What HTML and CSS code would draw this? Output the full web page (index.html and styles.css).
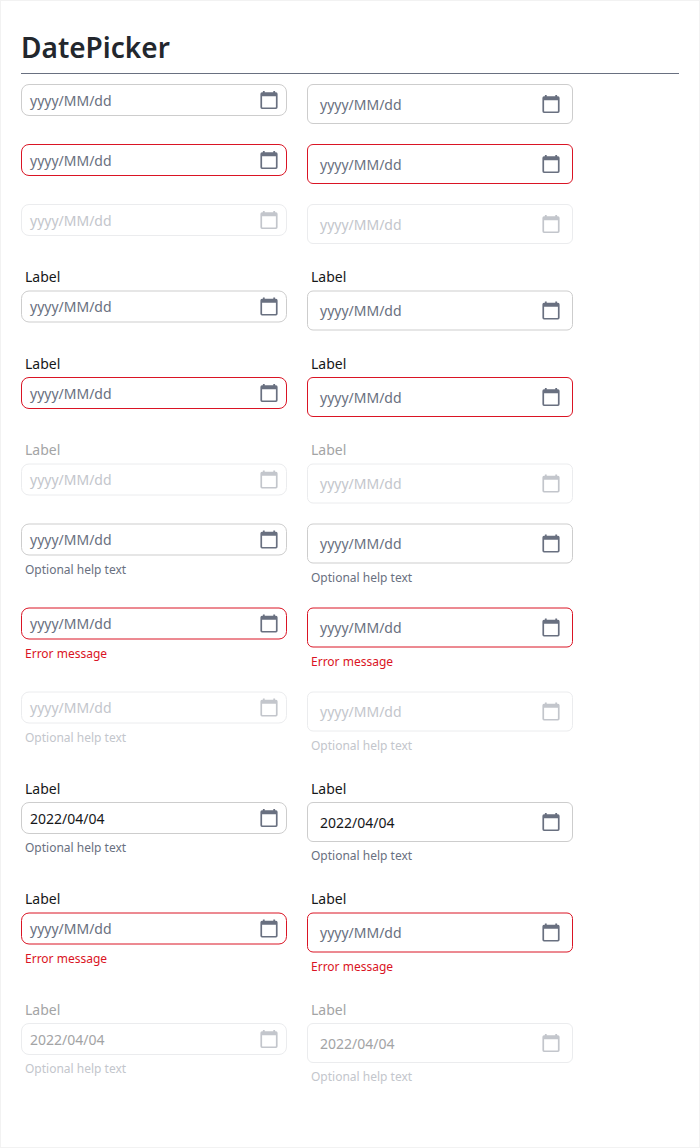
FILE: index.html
```html
<!DOCTYPE html>
<html lang="en">
<head>
<meta charset="utf-8">
<title>DatePicker</title>
<link rel="stylesheet" href="styles.css">
</head>
<body>
<svg width="0" height="0" class="sprite">
  <symbol id="cal" viewBox="0 0 18 20">
    <path fill="currentColor" fill-rule="evenodd" d="M2.900 1h1.800v1.300h8.600V1h1.800v1.300h.9a1.600 1.600 0 0 1 1.600 1.600V17.300a1.600 1.600 0 0 1-1.600 1.600H2a1.600 1.600 0 0 1-1.600-1.600V3.900A1.600 1.600 0 0 1 2 2.300h.9zM2.100 6.200v10.900q0 .3.3.3h13.200q.3 0 .3-.3V6.200z"/>
  </symbol>
</svg>
<main class="page">
  <h1 class="title">DatePicker</h1>
  <section class="grid">
    <div class="picker"><div class="control"><span>yyyy/MM/dd</span><svg class="icon"><use href="#cal"/></svg></div></div>
    <div class="picker large"><div class="control"><span>yyyy/MM/dd</span><svg class="icon"><use href="#cal"/></svg></div></div>

    <div class="picker error"><div class="control"><span>yyyy/MM/dd</span><svg class="icon"><use href="#cal"/></svg></div></div>
    <div class="picker large error"><div class="control"><span>yyyy/MM/dd</span><svg class="icon"><use href="#cal"/></svg></div></div>

    <div class="picker disabled"><div class="control"><span>yyyy/MM/dd</span><svg class="icon"><use href="#cal"/></svg></div></div>
    <div class="picker large disabled"><div class="control"><span>yyyy/MM/dd</span><svg class="icon"><use href="#cal"/></svg></div></div>

    <div class="picker half"><div class="label">Label</div><div class="control"><span>yyyy/MM/dd</span><svg class="icon"><use href="#cal"/></svg></div></div>
    <div class="picker large half"><div class="label">Label</div><div class="control"><span>yyyy/MM/dd</span><svg class="icon"><use href="#cal"/></svg></div></div>

    <div class="picker error"><div class="label tall">Label</div><div class="control"><span>yyyy/MM/dd</span><svg class="icon"><use href="#cal"/></svg></div></div>
    <div class="picker large error"><div class="label tall">Label</div><div class="control"><span>yyyy/MM/dd</span><svg class="icon"><use href="#cal"/></svg></div></div>

    <div class="picker disabled half"><div class="label">Label</div><div class="control"><span>yyyy/MM/dd</span><svg class="icon"><use href="#cal"/></svg></div></div>
    <div class="picker large disabled half"><div class="label">Label</div><div class="control"><span>yyyy/MM/dd</span><svg class="icon"><use href="#cal"/></svg></div></div>

    <div class="picker half"><div class="control"><span>yyyy/MM/dd</span><svg class="icon"><use href="#cal"/></svg></div><div class="help">Optional help text</div></div>
    <div class="picker large half"><div class="control"><span>yyyy/MM/dd</span><svg class="icon"><use href="#cal"/></svg></div><div class="help">Optional help text</div></div>

    <div class="picker error half"><div class="control"><span>yyyy/MM/dd</span><svg class="icon"><use href="#cal"/></svg></div><div class="help">Error message</div></div>
    <div class="picker large error half"><div class="control"><span>yyyy/MM/dd</span><svg class="icon"><use href="#cal"/></svg></div><div class="help">Error message</div></div>

    <div class="picker disabled half"><div class="control"><span>yyyy/MM/dd</span><svg class="icon"><use href="#cal"/></svg></div><div class="help">Optional help text</div></div>
    <div class="picker large disabled half"><div class="control"><span>yyyy/MM/dd</span><svg class="icon"><use href="#cal"/></svg></div><div class="help">Optional help text</div></div>

    <div class="picker filled"><div class="label tall">Label</div><div class="control"><span>2022/04/04</span><svg class="icon"><use href="#cal"/></svg></div><div class="help">Optional help text</div></div>
    <div class="picker large filled"><div class="label tall">Label</div><div class="control"><span>2022/04/04</span><svg class="icon"><use href="#cal"/></svg></div><div class="help">Optional help text</div></div>

    <div class="picker error half"><div class="label">Label</div><div class="control"><span>yyyy/MM/dd</span><svg class="icon"><use href="#cal"/></svg></div><div class="help">Error message</div></div>
    <div class="picker large error half"><div class="label">Label</div><div class="control"><span>yyyy/MM/dd</span><svg class="icon"><use href="#cal"/></svg></div><div class="help">Error message</div></div>

    <div class="picker disabled filled"><div class="label tall">Label</div><div class="control"><span>2022/04/04</span><svg class="icon"><use href="#cal"/></svg></div><div class="help">Optional help text</div></div>
    <div class="picker large disabled filled"><div class="label tall">Label</div><div class="control"><span>2022/04/04</span><svg class="icon"><use href="#cal"/></svg></div><div class="help">Optional help text</div></div>
  </section>
</main>
</body>
</html>
```

FILE: styles.css
```css
* { box-sizing: border-box; }
body {
  margin: 0;
  background: #fff;
  font-family: "Noto Sans", sans-serif;
  font-size: 14px;
  color: #161719;
}
.sprite { display: block; }
.page {
  height: 1148px;
  border: 1px solid #f2f2f2;
  padding: 20px;
}
.title {
  margin: 0;
  height: 53px;
  padding-top: 7px;
  border-bottom: 1px solid #697080;
  font-size: 28px;
  line-height: 38px;
  font-weight: 600;
  color: #23272d;
}
.grid {
  margin-top: 10px;
  display: grid;
  grid-template-columns: 266px 266px;
  column-gap: 20px;
  grid-template-rows: 60px 60px 60px 86px 87px 86px 84px 84px 84px 111px 110px 111px;
}
.label {
  height: 26px;
  padding: 3px 4px 0;
  line-height: 20px;
}
.label.tall { height: 27px; padding-top: 4px; }
.control {
  height: 32px;
  display: flex;
  align-items: center;
  justify-content: space-between;
  padding: 0 8px;
  border: 1px solid #cdcdcd;
  border-radius: 8px;
  color: #697080;
  line-height: 20px;
}
.control span { padding-top: 2px; }
.large .control {
  height: 40px;
  padding: 0 12px;
  border-radius: 6px;
}
.half .control { transform: translateY(.5px); }
.half .control span { padding-top: 0; }
.icon { width: 18px; height: 20px; color: #697080; }
.help {
  padding: 6px 4px 0;
  font-size: 12px;
  line-height: 16px;
  color: #697080;
}
.half .help { padding-top: 7px; }
.filled .control { color: #161719; }
.error .control { border-color: #da1424; }
.error .help { color: #da1424; }
.disabled .label, .disabled.filled .control { color: #a3a4a5; }
.disabled .control { border-color: #ebecee; color: #c3c6cc; }
.disabled .icon, .disabled .help { color: #c3c6cc; }
```
